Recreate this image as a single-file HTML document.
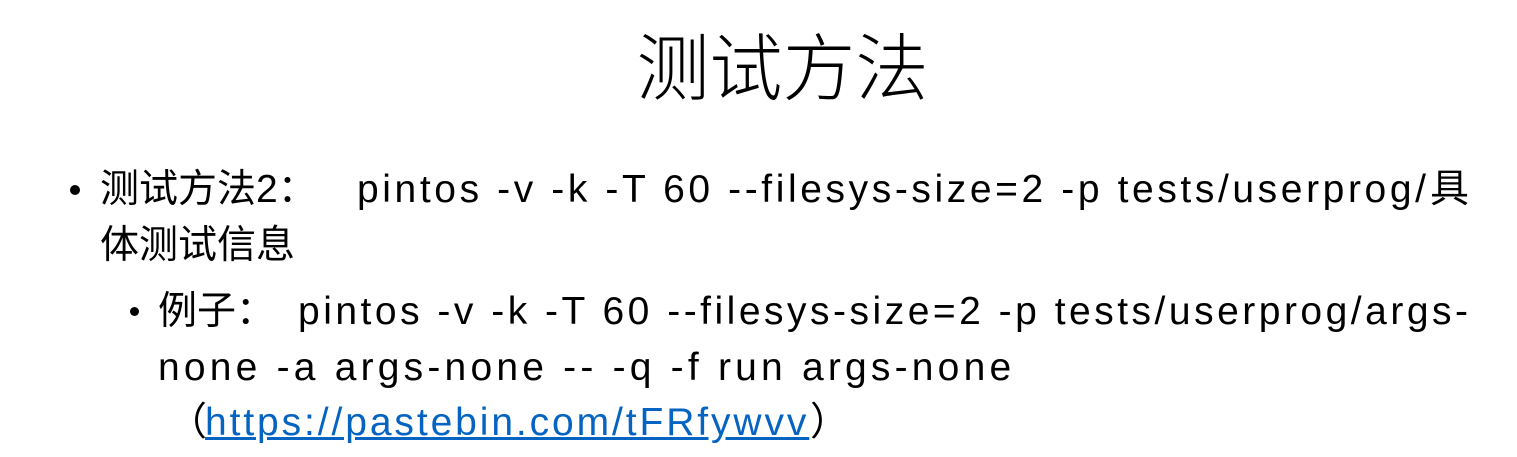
<!DOCTYPE html>
<html><head><meta charset="utf-8"><style>
html,body{margin:0;padding:0;background:#fff;}
body{width:1517px;height:457px;position:relative;overflow:hidden;font-family:"Liberation Sans","Noto Sans CJK SC",sans-serif;color:#000;}
.t{position:absolute;white-space:nowrap;}
#title{left:0;width:1565px;text-align:center;top:18px;font-size:73px;font-family:"Noto Sans CJK SC",sans-serif;font-weight:300;line-height:90px;}
.l{font-size:39px;line-height:56px;}
.e{letter-spacing:3.6px;}
a{color:#0563c1;text-decoration:underline;}
.dot{position:absolute;border-radius:50%;background:#000;}
</style></head><body>
<div class="t" id="title">测试方法</div>
<div class="dot" style="left:70px;top:185px;width:10px;height:10px"></div>
<div class="t l" style="left:100px;top:162px">测试方法2：</div>
<div class="t l e" style="left:357px;top:162px">pintos -v -k -T 60 --filesys-size=2 -p tests/userprog/</div>
<div class="t l" style="left:1430px;top:162px">具</div>
<div class="t l" style="left:100px;top:218px">体测试信息</div>
<div class="dot" style="left:130px;top:307px;width:9px;height:9px"></div>
<div class="t l" style="left:158px;top:284px">例子：</div>
<div class="t l e" style="left:298px;top:284px;letter-spacing:3.5px">pintos -v -k -T 60 --filesys-size=2 -p tests/userprog/args-</div>
<div class="t l e" style="left:158px;top:340px;letter-spacing:4.2px">none -a args-none -- -q -f run args-none</div>
<div class="t l" style="left:168px;top:395px">（</div>
<div class="t l e" style="left:205px;top:395px;letter-spacing:2.9px"><a>https://pastebin.com/tFRfywvv</a></div>
<div class="t l" style="left:810px;top:395px">）</div>
</body></html>
